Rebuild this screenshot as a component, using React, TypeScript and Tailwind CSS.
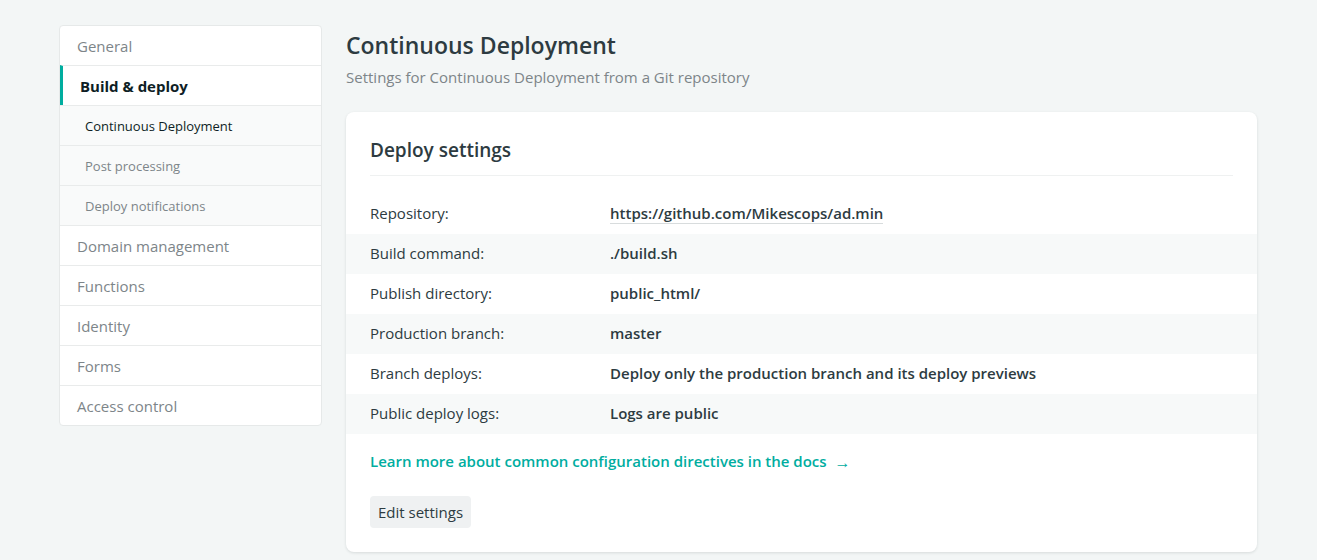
const font = { fontFamily: '"Open Sans", "Noto Sans", sans-serif' }

const navItems = [
  { label: 'General' },
  { label: 'Build & deploy', active: true },
  { label: 'Continuous Deployment', sub: true, current: true },
  { label: 'Post processing', sub: true },
  { label: 'Deploy notifications', sub: true },
  { label: 'Domain management' },
  { label: 'Functions' },
  { label: 'Identity' },
  { label: 'Forms' },
  { label: 'Access control' },
]

const rows = [
  { label: 'Repository:', value: 'https://github.com/Mikescops/ad.min', link: true },
  { label: 'Build command:', value: './build.sh' },
  { label: 'Publish directory:', value: 'public_html/' },
  { label: 'Production branch:', value: 'master' },
  { label: 'Branch deploys:', value: 'Deploy only the production branch and its deploy previews' },
  { label: 'Public deploy logs:', value: 'Logs are public' },
]

const Sidebar = () => (
  <nav className="w-[263px] shrink-0 self-start overflow-hidden rounded-[4px] border border-[#e6e9e9] bg-white">
    {navItems.map((item, i) => (
      <div
        key={item.label}
        className={`flex items-center pt-0.5 ${i > 0 ? 'h-10 border-t border-[#e9ebeb]' : 'h-[39px]'} ${
          item.sub ? 'bg-[#f9fafa] pl-[25px] text-[13px]' : 'pl-[17px] text-[15px]'
        } ${item.active ? 'border-l-[3px] border-l-[#00ad9f] pl-[14px] font-bold text-[#0e1e25]' : ''} ${
          item.current ? 'text-[#0e1e25]' : item.active ? '' : 'text-[#7d8589]'
        }`}
      >
        {item.label}
      </div>
    ))}
  </nav>
)

export default function App() {
  return (
    <div className="min-h-[560px] bg-[#f3f6f6] pt-[25px] pl-[59px] pr-[60px]" style={font}>
      <div className="flex gap-6">
        <Sidebar />
        <main className="flex-1">
          <h1 className="mt-[4px] text-[23px] font-semibold leading-8 text-[#2d3b41]">Continuous Deployment</h1>
          <p className="mt-[5px] text-[15px] text-[#7d8589]">Settings for Continuous Deployment from a Git repository</p>
          <section className="mt-[23px] rounded-[8px] bg-white pb-6 shadow-[0_1px_3px_rgba(14,30,37,0.12)]">
            <div className="px-6 pt-[26px]">
              <h2 className="border-b border-[#eff1f1] pb-[13px] text-[19px] font-semibold leading-6 text-[#2d3b41]">Deploy settings</h2>
            </div>
            <dl className="mt-[18px]">
              {rows.map((r, i) => (
                <div key={r.label} className={`flex h-10 items-center px-6 text-[15px] ${i % 2 === 1 ? 'bg-[#f7f9f9]' : ''}`}>
                  <dt className="w-[240px] text-[#2d3b41]">{r.label}</dt>
                  <dd className={`font-semibold text-[#2d3b41] ${r.link ? 'border-b border-[#d8dcdd] leading-5' : ''}`}>{r.value}</dd>
                </div>
              ))}
            </dl>
            <div className="px-6">
              <a className="mt-4 flex items-center text-[15px] font-semibold text-[#00ad9f]">
                Learn more about common configuration directives in the docs
                <span className="ml-2 font-normal text-[16px]">→</span>
              </a>
              <button className="mt-[22px] rounded-[4px] bg-[#eff1f2] px-2 py-1.5 text-[15px] leading-5 text-[#2d3b41]">Edit settings</button>
            </div>
          </section>
        </main>
      </div>
    </div>
  )
}
